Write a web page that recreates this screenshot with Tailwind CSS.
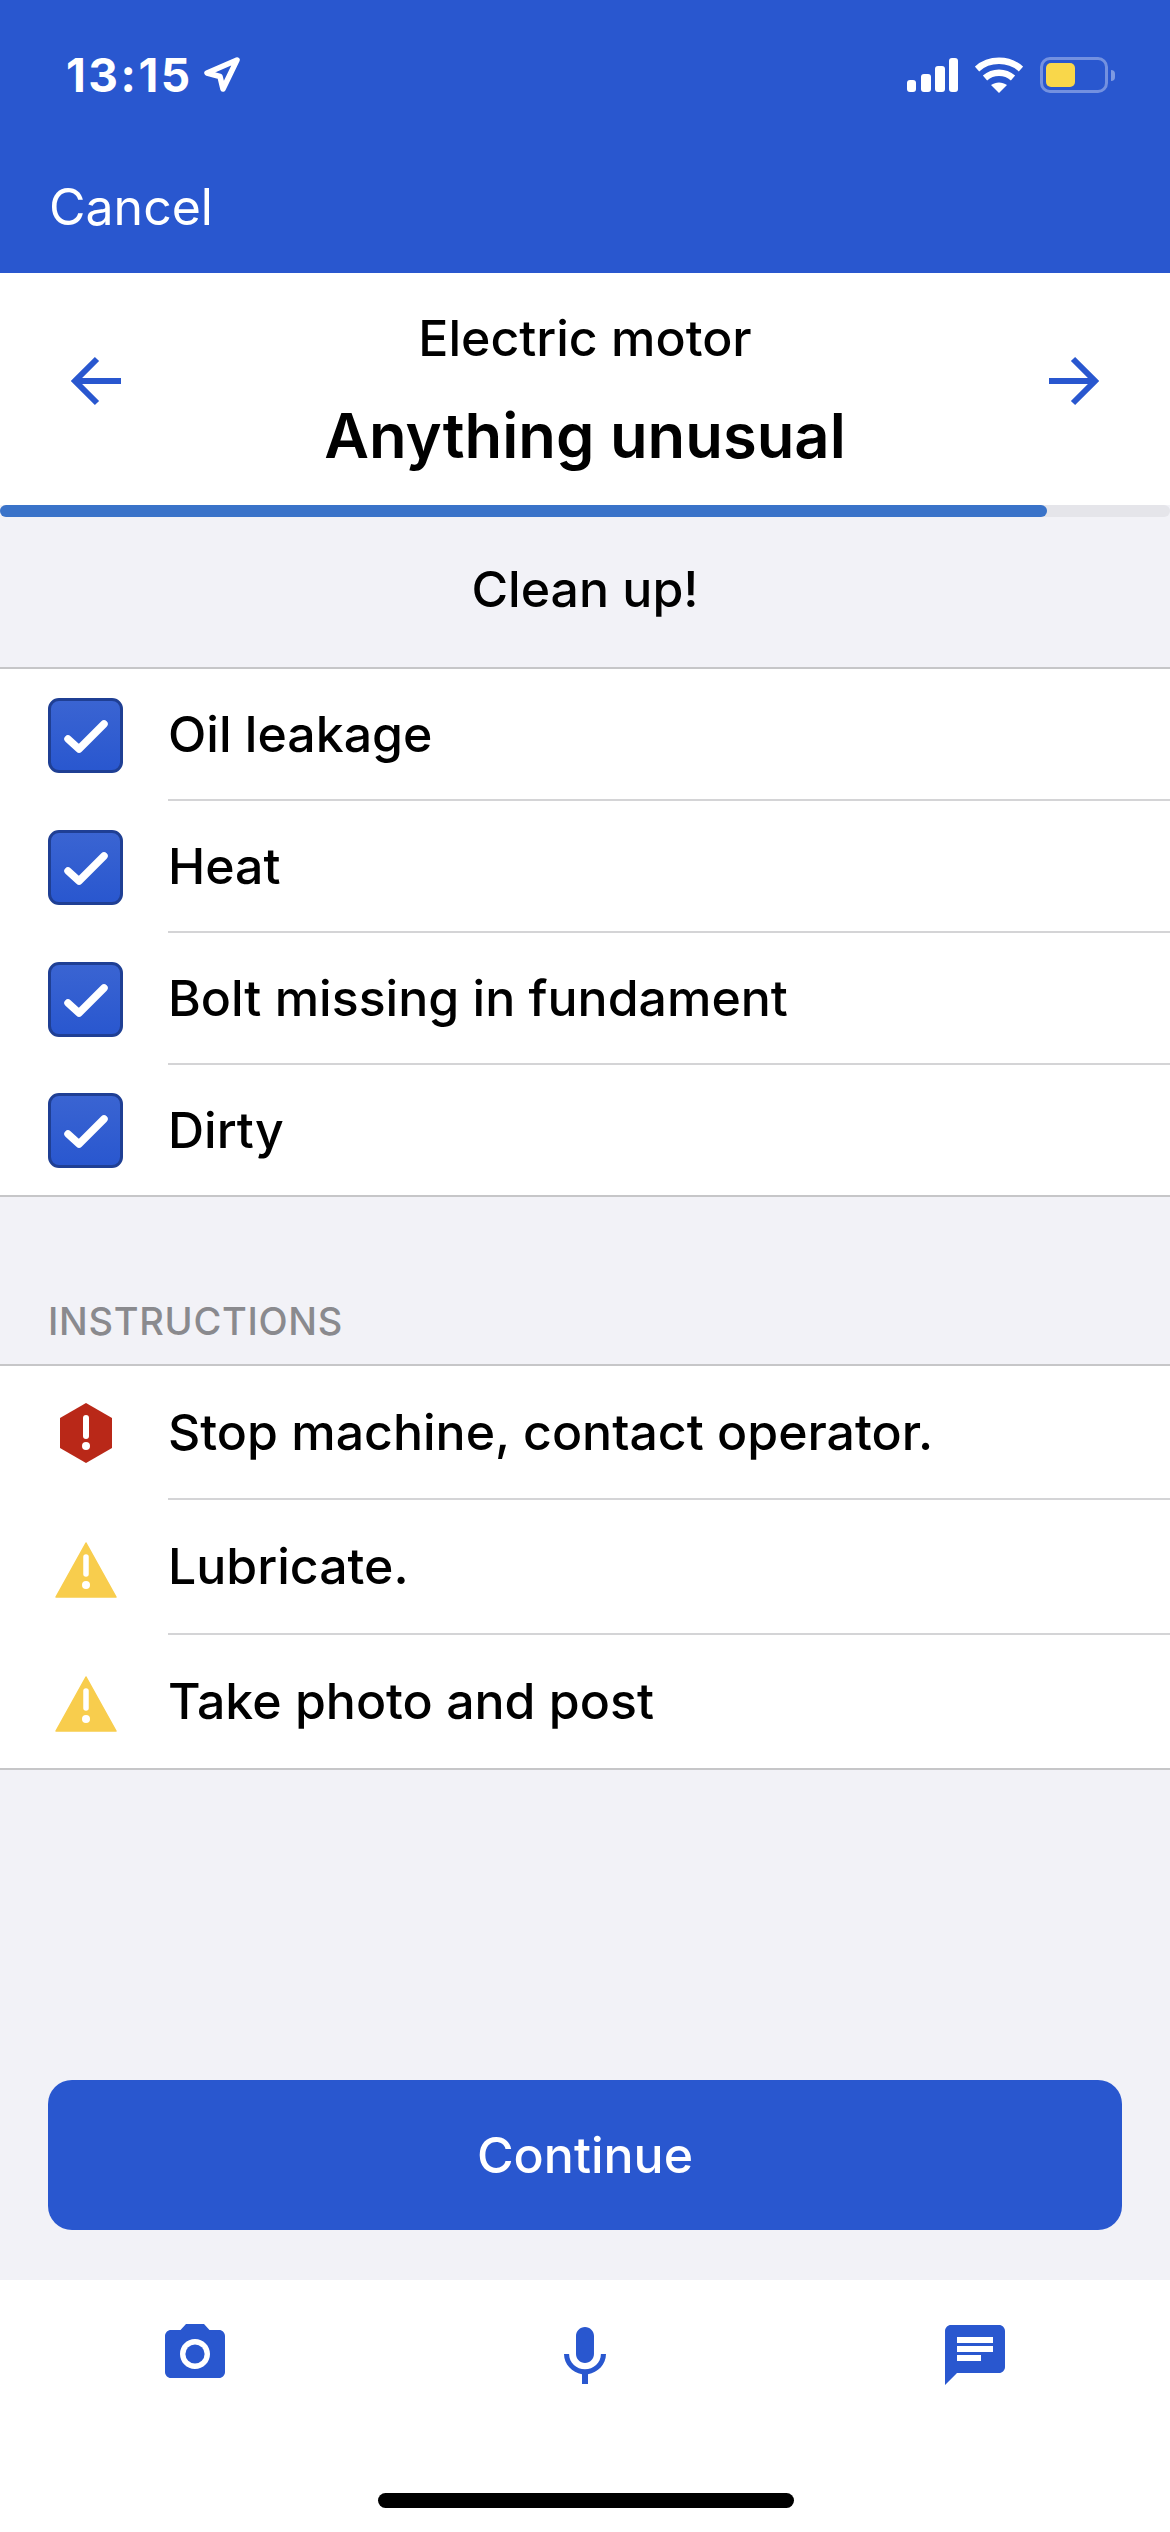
<!DOCTYPE html>
<html lang="en">
<head>
    <meta charset="UTF-8">
    <meta name="viewport" content="width=device-width, initial-scale=1.0">
    <title>Electric motor</title>
    <script src="https://cdn.jsdelivr.net/npm/@tailwindcss/browser@4"></script>
</head>
<body class="bg-[#f2f2f7] text-black font-['Inter',sans-serif]">
<div class="w-[1170px] h-[2532px] flex flex-col overflow-hidden">

    <!-- Header -->
    <header class="h-[273px] bg-[#2957cf] text-white flex flex-col shrink-0">
        <div class="h-[150px] pl-[66px] pr-[55px] flex items-center justify-between">
            <div class="flex items-center gap-[9px]">
                <span class="text-[46px] leading-none font-bold tracking-[2.5px]">13:15</span>
                <svg class="w-[40px] h-[40px]" viewBox="0 0 40 40" fill="none" stroke="white" stroke-width="5.500" stroke-linejoin="round"><path d="M35 5 5 18l13 3.500L21 34z"/></svg>
            </div>
            <div class="flex items-center gap-[17px]">
                <svg class="w-[51px] h-[34px]" viewBox="0 0 51 34" fill="white"><rect x="0" y="22" width="9" height="12" rx="3"/><rect x="14" y="16" width="10" height="18" rx="3"/><rect x="28" y="8" width="10" height="26" rx="3"/><rect x="42" y="0" width="9" height="34" rx="3"/></svg>
                <svg class="w-[48px] h-[36px]" viewBox="0 0 48 36" fill="none" stroke="white" stroke-width="6.500"><path d="M2 12C14 1 34 1 46 12"/><path d="M10 21c8-7 20-7 28 0"/><path d="M24 36 16 28c5-3.500 11-3.500 16 0z" fill="white" stroke="none"/></svg>
                <div class="flex items-center gap-[3px]">
                    <div class="w-[68px] h-[36px] rounded-[10px] border-[3px] border-white/35 p-[3px]">
                        <div class="w-[29px] h-full rounded-[5px] bg-[#f9d74a]"></div>
                    </div>
                    <div class="w-[4px] h-[11px] rounded-r-full bg-white/40"></div>
                </div>
            </div>
        </div>
        <div class="pl-[49px] mt-[27px] text-[50px] leading-[60px]">Cancel</div>
    </header>

    <!-- Title bar -->
    <div class="h-[232px] bg-white shrink-0 flex items-start justify-between pl-[71px] pr-[71px]">
        <svg class="w-[50px] h-[50px] mt-[83px]" viewBox="0 0 50 50" fill="none" stroke="#2957cf" stroke-width="6"><path d="M50 25H6M26 3 4 25l22 22"/></svg>
        <div class="flex flex-col items-center pt-[35px]">
            <div class="text-[50px] leading-[60px] font-[550]">Electric motor</div>
            <div class="text-[61.5px] leading-[78px] font-semibold mt-[29px]">Anything unusual</div>
        </div>
        <svg class="w-[50px] h-[50px] mt-[83px]" viewBox="0 0 50 50" fill="none" stroke="#2957cf" stroke-width="6"><path d="M0 25h44M24 3l22 22-22 22"/></svg>
    </div>
    <div class="h-[12px] bg-[#e5e5ea] rounded-full shrink-0">
        <div class="h-full w-[1047px] bg-[#3a73c9] rounded-full"></div>
    </div>

    <!-- Status -->
    <div class="h-[152px] shrink-0 border-b-[2px] border-[#c6c6c8] flex items-center justify-center pb-[6px] text-[50px] font-[550]">Clean up!</div>

    <!-- Checklist -->
    <ul class="bg-white border-b-[2px] border-[#c6c6c8] shrink-0">
        <li class="h-[132px] flex items-center pl-[48px]">
            <div class="w-[75px] h-[75px] shrink-0 rounded-[11px] border-[3px] border-[#1f3f94] bg-gradient-to-b from-[#3a64d2] to-[#2957cf] flex items-center justify-center">
                <svg class="w-[45px] h-[34px] mt-[2px]" viewBox="0 0 45 34" fill="none" stroke="white" stroke-width="7.500" stroke-linecap="round" stroke-linejoin="round"><path d="M5 20l11 10L41 5"/></svg>
            </div>
            <div class="ml-[45px] flex-1 h-full border-b-[2px] border-[#d4d4d6] flex items-center text-[50px] font-[550]">Oil leakage</div>
        </li>
        <li class="h-[132px] flex items-center pl-[48px]">
            <div class="w-[75px] h-[75px] shrink-0 rounded-[11px] border-[3px] border-[#1f3f94] bg-gradient-to-b from-[#3a64d2] to-[#2957cf] flex items-center justify-center">
                <svg class="w-[45px] h-[34px] mt-[2px]" viewBox="0 0 45 34" fill="none" stroke="white" stroke-width="7.500" stroke-linecap="round" stroke-linejoin="round"><path d="M5 20l11 10L41 5"/></svg>
            </div>
            <div class="ml-[45px] flex-1 h-full border-b-[2px] border-[#d4d4d6] flex items-center text-[50px] font-[550]">Heat</div>
        </li>
        <li class="h-[132px] flex items-center pl-[48px]">
            <div class="w-[75px] h-[75px] shrink-0 rounded-[11px] border-[3px] border-[#1f3f94] bg-gradient-to-b from-[#3a64d2] to-[#2957cf] flex items-center justify-center">
                <svg class="w-[45px] h-[34px] mt-[2px]" viewBox="0 0 45 34" fill="none" stroke="white" stroke-width="7.500" stroke-linecap="round" stroke-linejoin="round"><path d="M5 20l11 10L41 5"/></svg>
            </div>
            <div class="ml-[45px] flex-1 h-full border-b-[2px] border-[#d4d4d6] flex items-center text-[50px] font-[550]">Bolt missing in fundament</div>
        </li>
        <li class="h-[130px] flex items-center pl-[48px]">
            <div class="w-[75px] h-[75px] shrink-0 rounded-[11px] border-[3px] border-[#1f3f94] bg-gradient-to-b from-[#3a64d2] to-[#2957cf] flex items-center justify-center">
                <svg class="w-[45px] h-[34px] mt-[2px]" viewBox="0 0 45 34" fill="none" stroke="white" stroke-width="7.500" stroke-linecap="round" stroke-linejoin="round"><path d="M5 20l11 10L41 5"/></svg>
            </div>
            <div class="ml-[45px] flex-1 h-full flex items-center text-[50px] font-[550]">Dirty</div>
        </li>
    </ul>

    <!-- Instructions -->
    <div class="h-[167px] shrink-0 flex items-end pl-[48px] pb-[20px] text-[38px] leading-[46px] tracking-[0.7px] text-[#8a8a8e] font-[550]">INSTRUCTIONS</div>
    <ul class="bg-white border-y-[2px] border-[#c6c6c8] shrink-0">
        <li class="h-[134px] flex items-center">
            <div class="w-[168px] shrink-0 flex justify-center">
                <svg class="w-[54px] h-[60px] mr-[-3px]" viewBox="0 0 54 60"><path d="M27 0 53 15v30L27 60 1 45V15z" fill="#b92818"/><path d="M27 15v18" stroke="white" stroke-width="6" stroke-linecap="round"/><circle cx="27" cy="43" r="4" fill="white"/></svg>
            </div>
            <div class="flex-1 h-full border-b-[2px] border-[#d4d4d6] flex items-center text-[50px] font-[550]">Stop machine, contact operator.</div>
        </li>
        <li class="h-[135px] flex items-center">
            <div class="w-[168px] shrink-0 flex justify-center mt-[5px]">
                <svg class="w-[62px] h-[56px] mr-[-3px]" viewBox="0 0 62 56"><path d="M31 1 61 55H1z" fill="#f8cd4d" stroke="#f8cd4d" stroke-width="1.500" stroke-linejoin="round"/><path d="M31 15v17" stroke="white" stroke-width="5.500" stroke-linecap="round"/><circle cx="31" cy="43" r="4" fill="white"/></svg>
            </div>
            <div class="flex-1 h-full border-b-[2px] border-[#d4d4d6] flex items-center text-[50px] font-[550]">Lubricate.</div>
        </li>
        <li class="h-[133px] flex items-center">
            <div class="w-[168px] shrink-0 flex justify-center mt-[5px]">
                <svg class="w-[62px] h-[56px] mr-[-3px]" viewBox="0 0 62 56"><path d="M31 1 61 55H1z" fill="#f8cd4d" stroke="#f8cd4d" stroke-width="1.500" stroke-linejoin="round"/><path d="M31 15v17" stroke="white" stroke-width="5.500" stroke-linecap="round"/><circle cx="31" cy="43" r="4" fill="white"/></svg>
            </div>
            <div class="flex-1 h-full flex items-center text-[50px] font-[550]">Take photo and post</div>
        </li>
    </ul>

    <!-- Continue -->
    <div class="flex-1 flex flex-col justify-end px-[48px] pb-[50px]">
        <button class="h-[150px] w-full rounded-[24px] bg-[#2957cf] text-white text-[50px] font-medium">Continue</button>
    </div>

    <!-- Bottom toolbar -->
    <nav class="h-[252px] bg-white shrink-0 relative grid grid-cols-3 justify-items-center pt-[38px] items-start">
        <svg class="w-[72px] h-[72px]" viewBox="0 0 24 24" fill="#2957cf"><circle cx="12" cy="12" r="3.200"/><path d="M9 2 7.170 4H4c-1.100 0-2 .9-2 2v12c0 1.100.9 2 2 2h16c1.100 0 2-.9 2-2V6c0-1.100-.9-2-2-2h-3.170L15 2H9zm3 15c-2.760 0-5-2.240-5-5s2.240-5 5-5 5 2.240 5 5-2.240 5-5 5z"/></svg>
        <svg class="w-[72px] h-[72px] mt-[3px]" viewBox="0 0 24 24" fill="#2957cf"><path d="M12 14c1.660 0 2.990-1.340 2.990-3L15 5c0-1.660-1.340-3-3-3S9 3.340 9 5v6c0 1.660 1.340 3 3 3zm5.300-3c0 3-2.540 5.100-5.300 5.100S6.700 14 6.700 11H5c0 3.410 2.720 6.230 6 6.720V21h2v-3.280c3.280-.48 6-3.300 6-6.720h-1.700z"/></svg>
        <svg class="w-[72px] h-[72px] mt-[1px]" viewBox="0 0 24 24" fill="#2957cf"><path d="M20 2H4c-1.100 0-1.990.9-1.990 2L2 22l4-4h14c1.100 0 2-.9 2-2V4c0-1.100-.9-2-2-2zM6 9h12v2H6V9zm8 5H6v-2h8v2zm4-6H6V6h12v2z"/></svg>
        <div class="absolute left-[378px] top-[213px] w-[416px] h-[15px] rounded-full bg-black"></div>
    </nav>
</div>
</body>
</html>
